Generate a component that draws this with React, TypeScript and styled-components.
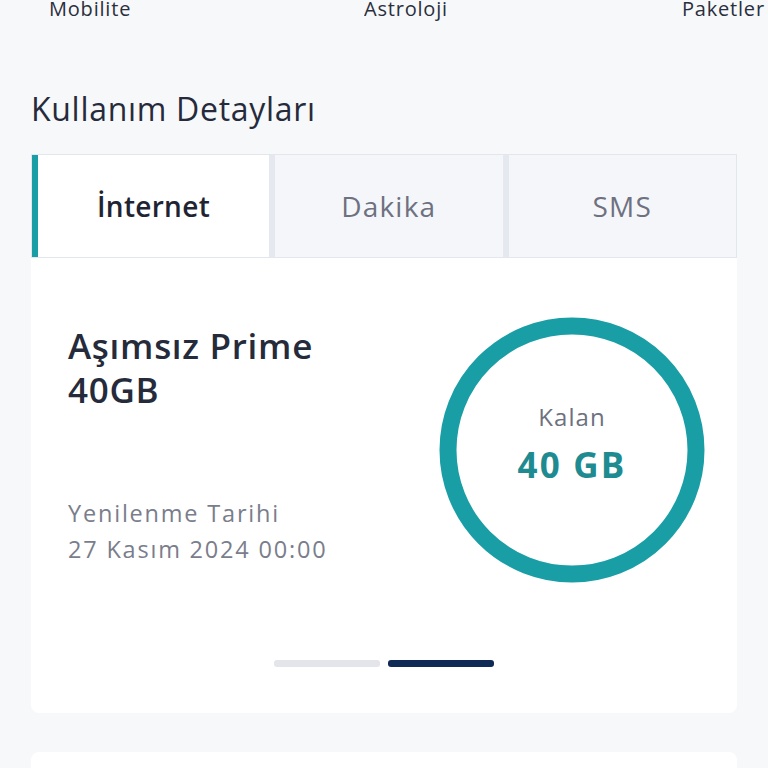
import styled, { createGlobalStyle } from 'styled-components';

const GlobalStyle = createGlobalStyle`
    html, body {
        margin: 0;
        padding: 0;
        background: #f7f8fa;
        font-family: 'Open Sans', 'Noto Sans', sans-serif;
        color: #22283a;
    }
    * { box-sizing: border-box; }
`;

const TABS = ['İnternet', 'Dakika', 'SMS'];

const App = () => {
    return (
        <>
            <GlobalStyle />
            <Page>
                <TopNav>
                    <NavItem>Mobilite</NavItem>
                    <NavItem>Astroloji</NavItem>
                    <NavItem>Paketler</NavItem>
                </TopNav>

                <SectionTitle>Kullanım Detayları</SectionTitle>

                <TabBar>
                    {TABS.map((tab, i) => (
                        <Tab key={tab} $active={i === 0}>
                            {tab}
                        </Tab>
                    ))}
                </TabBar>

                <UsageCard>
                    <CardBody>
                        <PlanInfo>
                            <PlanName>
                                Aşımsız Prime
                                <br />
                                40GB
                            </PlanName>
                            <RenewBlock>
                                <RenewText>Yenilenme Tarihi</RenewText>
                                <RenewText>27 Kasım 2024 00:00</RenewText>
                            </RenewBlock>
                        </PlanInfo>
                        <Gauge>
                            <GaugeRing viewBox="0 0 266 266">
                                <circle cx="133" cy="133" r="124" fill="none" stroke="#1a9ea6" strokeWidth="17" />
                            </GaugeRing>
                            <GaugeLabel>Kalan</GaugeLabel>
                            <GaugeValue>40 GB</GaugeValue>
                        </Gauge>
                    </CardBody>
                    <Pager>
                        <PagerDot />
                        <PagerDot $active />
                    </Pager>
                </UsageCard>

                <NextCard />
            </Page>
        </>
    );
};

export default App;

const Page = styled.div`
    width: 768px;
    height: 768px;
    overflow: hidden;
    padding: 0 31px;
`;

const TopNav = styled.div`
    display: grid;
    grid-template-columns: 333px 318px 1fr;
    margin-top: -6px;
    height: 30px;
    margin-right: -31px;
`;

const NavItem = styled.div`
    font-size: 20px;
    line-height: 30px;
    letter-spacing: 0.8px;
    color: #2a2f3d;
    white-space: nowrap;
    overflow: hidden;
    &:first-child { padding-left: 18px; }
`;

const SectionTitle = styled.h2`
    margin: 65px 0 0;
    font-size: 32px;
    font-weight: 400;
    line-height: 40px;
    letter-spacing: 0.7px;
    color: #262b3b;
`;

const TabBar = styled.div`
    display: grid;
    grid-template-columns: 237px 1fr 1fr;
    gap: 6px;
    margin-top: 25px;
    background: #e6e8ef;
    border: 1px solid #e3e6ed;
`;

const Tab = styled.div<{ $active?: boolean }>`
    height: 102px;
    display: flex;
    align-items: center;
    justify-content: center;
    font-size: 28px;
    letter-spacing: ${({ $active }) => ($active ? '0.3px' : '1.2px')};
    font-weight: ${({ $active }) => ($active ? 600 : 400)};
    color: ${({ $active }) => ($active ? '#1f2433' : '#6d7180')};
    background: ${({ $active }) => ($active ? '#ffffff' : '#f5f6fa')};
    border-left: ${({ $active }) => ($active ? '6px solid #1a9ea6' : 'none')};
`;

const UsageCard = styled.div`
    background: #ffffff;
    border-radius: 0 0 8px 8px;
    height: 455px;
    padding-top: 66px;
    display: flex;
    flex-direction: column;
`;

const CardBody = styled.div`
    display: flex;
    justify-content: space-between;
    padding: 0 32px 0 37px;
`;

const PlanInfo = styled.div`
    display: flex;
    flex-direction: column;
`;

const PlanName = styled.div`
    font-size: 35px;
    font-weight: 600;
    line-height: 44px;
    letter-spacing: 0.7px;
    color: #262b3b;
`;

const RenewBlock = styled.div`
    margin-top: 86px;
    display: flex;
    flex-direction: column;
    gap: 6px;
`;

const RenewText = styled.div`
    font-size: 23.5px;
    line-height: 30px;
    letter-spacing: 1.8px;
    color: #7a7d8b;
`;

const Gauge = styled.div`
    position: relative;
    width: 266px;
    height: 266px;
    margin-top: -7px;
    display: flex;
    flex-direction: column;
    align-items: center;
    justify-content: center;
`;

const GaugeRing = styled.svg`
    position: absolute;
    inset: 0;
    width: 266px;
    height: 266px;
`;

const GaugeLabel = styled.div`
    font-size: 24px;
    line-height: 30px;
    letter-spacing: 1.1px;
    color: #6d7180;
    margin-top: -14px;
`;

const GaugeValue = styled.div`
    margin-top: 13px;
    font-size: 35px;
    line-height: 40px;
    font-weight: 700;
    letter-spacing: 2.2px;
    color: #1e8b90;
`;

const Pager = styled.div`
    display: flex;
    justify-content: center;
    gap: 8px;
    margin-top: 77px;
`;

const PagerDot = styled.div<{ $active?: boolean }>`
    width: 106px;
    height: 7px;
    border-radius: 3px;
    background: ${({ $active }) => ($active ? '#0f2a55' : '#e3e5eb')};
`;

const NextCard = styled.div`
    margin-top: 39px;
    height: 60px;
    background: #ffffff;
    border-radius: 8px 8px 0 0;
`;
